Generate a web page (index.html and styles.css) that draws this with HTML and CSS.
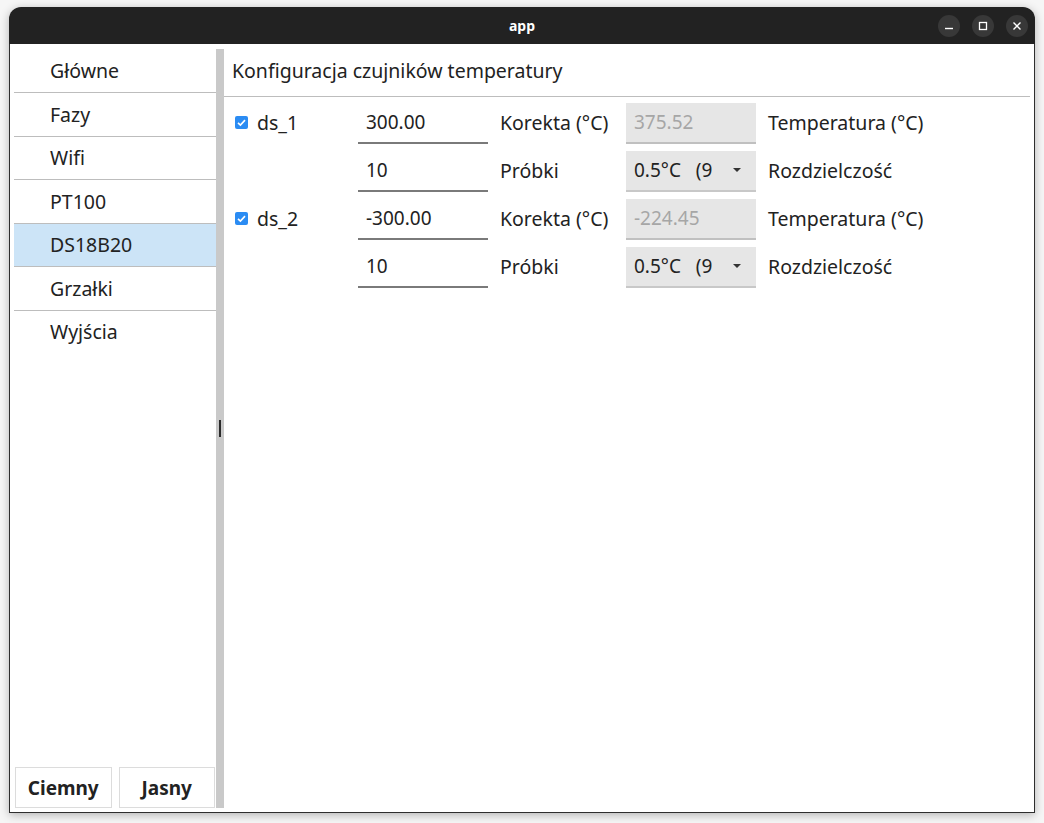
FILE: index.html
```html
<!DOCTYPE html>
<html lang="pl">
<head>
<meta charset="utf-8">
<title>app</title>
<link rel="stylesheet" href="styles.css">
</head>
<body>
<div class="window">
  <div class="titlebar">
    <div class="title">app</div>
    <div class="wbtns">
      <span class="wbtn"><svg width="12" height="12" viewBox="0 0 12 12"><path d="M2 8.5h8" stroke="#fff" stroke-width="1.4"/></svg></span>
      <span class="wbtn"><svg width="12" height="12" viewBox="0 0 12 12"><rect x="2.5" y="2.5" width="7" height="7" fill="none" stroke="#fff" stroke-width="1.3"/></svg></span>
      <span class="wbtn"><svg width="12" height="12" viewBox="0 0 12 12"><path d="M2.5 2.5l7 7M9.5 2.5l-7 7" stroke="#fff" stroke-width="1.4"/></svg></span>
    </div>
  </div>
  <div class="client">
    <div class="sidebar">
      <ul class="nav">
        <li class="item">Główne</li>
        <li class="item">Fazy</li>
        <li class="item">Wifi</li>
        <li class="item">PT100</li>
        <li class="item selected">DS18B20</li>
        <li class="item">Grzałki</li>
        <li class="item">Wyjścia</li>
      </ul>
      <div class="themes">
        <button class="tbtn">Ciemny</button>
        <button class="tbtn">Jasny</button>
      </div>
    </div>
    <div class="splitter"><span class="handle"></span></div>
    <div class="pane">
      <div class="header">Konfiguracja czujników temperatury</div>
      <div class="grid">
        <div class="cell sensor"><span class="check"><svg width="13" height="13" viewBox="0 0 13 13"><path d="M3 6.8l2.4 2.3 4.6-5" fill="none" stroke="#fff" stroke-width="1.6"/></svg></span>ds_1</div>
        <div class="field edit">300.00</div>
        <div class="cell label">Korekta (°C)</div>
        <div class="field readonly">375.52</div>
        <div class="cell label">Temperatura (°C)</div>

        <div class="cell"></div>
        <div class="field edit">10</div>
        <div class="cell label">Próbki</div>
        <div class="field combo"><span class="ctext">0.5°C   (9</span><span class="arrow"></span></div>
        <div class="cell label">Rozdzielczość</div>

        <div class="cell sensor"><span class="check"><svg width="13" height="13" viewBox="0 0 13 13"><path d="M3 6.8l2.4 2.3 4.6-5" fill="none" stroke="#fff" stroke-width="1.6"/></svg></span>ds_2</div>
        <div class="field edit">-300.00</div>
        <div class="cell label">Korekta (°C)</div>
        <div class="field readonly">-224.45</div>
        <div class="cell label">Temperatura (°C)</div>

        <div class="cell"></div>
        <div class="field edit">10</div>
        <div class="cell label">Próbki</div>
        <div class="field combo"><span class="ctext">0.5°C   (9</span><span class="arrow"></span></div>
        <div class="cell label">Rozdzielczość</div>
      </div>
    </div>
  </div>
</div>
</body>
</html>
```
FILE: styles.css
```css
* { box-sizing: border-box; }
html, body { margin: 0; padding: 0; }
body {
  width: 1044px;
  height: 823px;
  background: #f6f6f6;
  font-family: "Noto Sans", "Open Sans", sans-serif;
  color: #222;
  overflow: hidden;
}
.window {
  margin: 7px 0 0 9px;
  width: 1026px;
  height: 806px;
  display: flex;
  flex-direction: column;
  border-radius: 12px 12px 0 0;
  box-shadow: 0 2px 10px rgba(0,0,0,0.28);
}
.titlebar {
  height: 37px;
  background: #222222;
  border-radius: 12px 12px 0 0;
  display: flex;
  align-items: center;
  justify-content: center;
  position: relative;
}
.title {
  color: #fff;
  font-weight: bold;
  font-size: 14px;
  font-family: "Noto Sans", sans-serif;
}
.wbtns {
  position: absolute;
  right: 7px;
  top: 8px;
  display: flex;
  gap: 12px;
}
.wbtn {
  width: 22px;
  height: 22px;
  border-radius: 50%;
  background: #383838;
  display: flex;
  align-items: center;
  justify-content: center;
}
.client {
  flex: 1;
  display: flex;
  background: #fff;
  border: 1px solid #2e2e2e;
  border-top: none;
  padding: 5px 0 4px 0;
}
.sidebar {
  width: 206px;
  display: flex;
  flex-direction: column;
}
.nav {
  list-style: none;
  margin: 0;
  padding: 0 0 0 4px;
  flex: 1;
}
.item {
  height: 43.5px;
  padding-left: 36px;
  font-size: 19.5px;
  display: flex;
  align-items: center;
  border-top: 1px solid #bdbdbd;
}
.item:first-child { border-top: none; height: 43px; }
.item.selected { background: #cce4f7; }
.themes {
  display: flex;
  gap: 7px;
  padding: 0 1px 0 5px;
}
.tbtn {
  flex: 1;
  height: 41px;
  background: #fff;
  border: 1px solid #dcdcdc;
  font-family: "Noto Sans", sans-serif;
  font-weight: bold;
  font-size: 19px;
  color: #222;
  padding: 0;
}
.splitter {
  width: 8px;
  background: #c9c9c9;
  display: flex;
  align-items: center;
  justify-content: center;
}
.handle {
  width: 2px;
  height: 17px;
  background: #2a2a2a;
}
.pane {
  flex: 1;
  display: flex;
  flex-direction: column;
}
.header {
  height: 48px;
  margin-right: 4px;
  padding: 0 0 4px 8px;
  font-size: 19.5px;
  display: flex;
  align-items: center;
  border-bottom: 1px solid #bdbdbd;
}
.grid {
  margin-top: 6px;
  display: grid;
  grid-template-columns: 134px 130px 138px 130px 1fr;
  grid-auto-rows: 41px;
  row-gap: 7px;
}
.cell {
  display: flex;
  align-items: center;
  font-size: 19.5px;
  padding-bottom: 3px;
}
.sensor { padding-left: 11px; align-items: flex-start; padding-top: 6px; }
.check {
  width: 13px;
  height: 13px;
  border-radius: 2px;
  background: #2b8cf3;
  margin: 7px 9px 0 0;
  display: flex;
}
.label { padding-left: 12px; }
.field {
  display: flex;
  align-items: center;
  padding: 0 0 2px 8px;
  font-size: 19px;
}
.edit { border-bottom: 2px solid #7a7a7a; }
.readonly {
  background: #e6e6e6;
  color: #a6a6a6;
  border-bottom: 2px solid #c0c0c0;
}
.combo {
  background: #e6e6e6;
  border-bottom: 2px solid #c8c8c8;
  justify-content: space-between;
  padding-right: 15px;
}
.ctext { white-space: pre; }
.arrow {
  width: 0;
  height: 0;
  border-left: 4px solid transparent;
  border-right: 4px solid transparent;
  border-top: 4px solid #333;
}
```
